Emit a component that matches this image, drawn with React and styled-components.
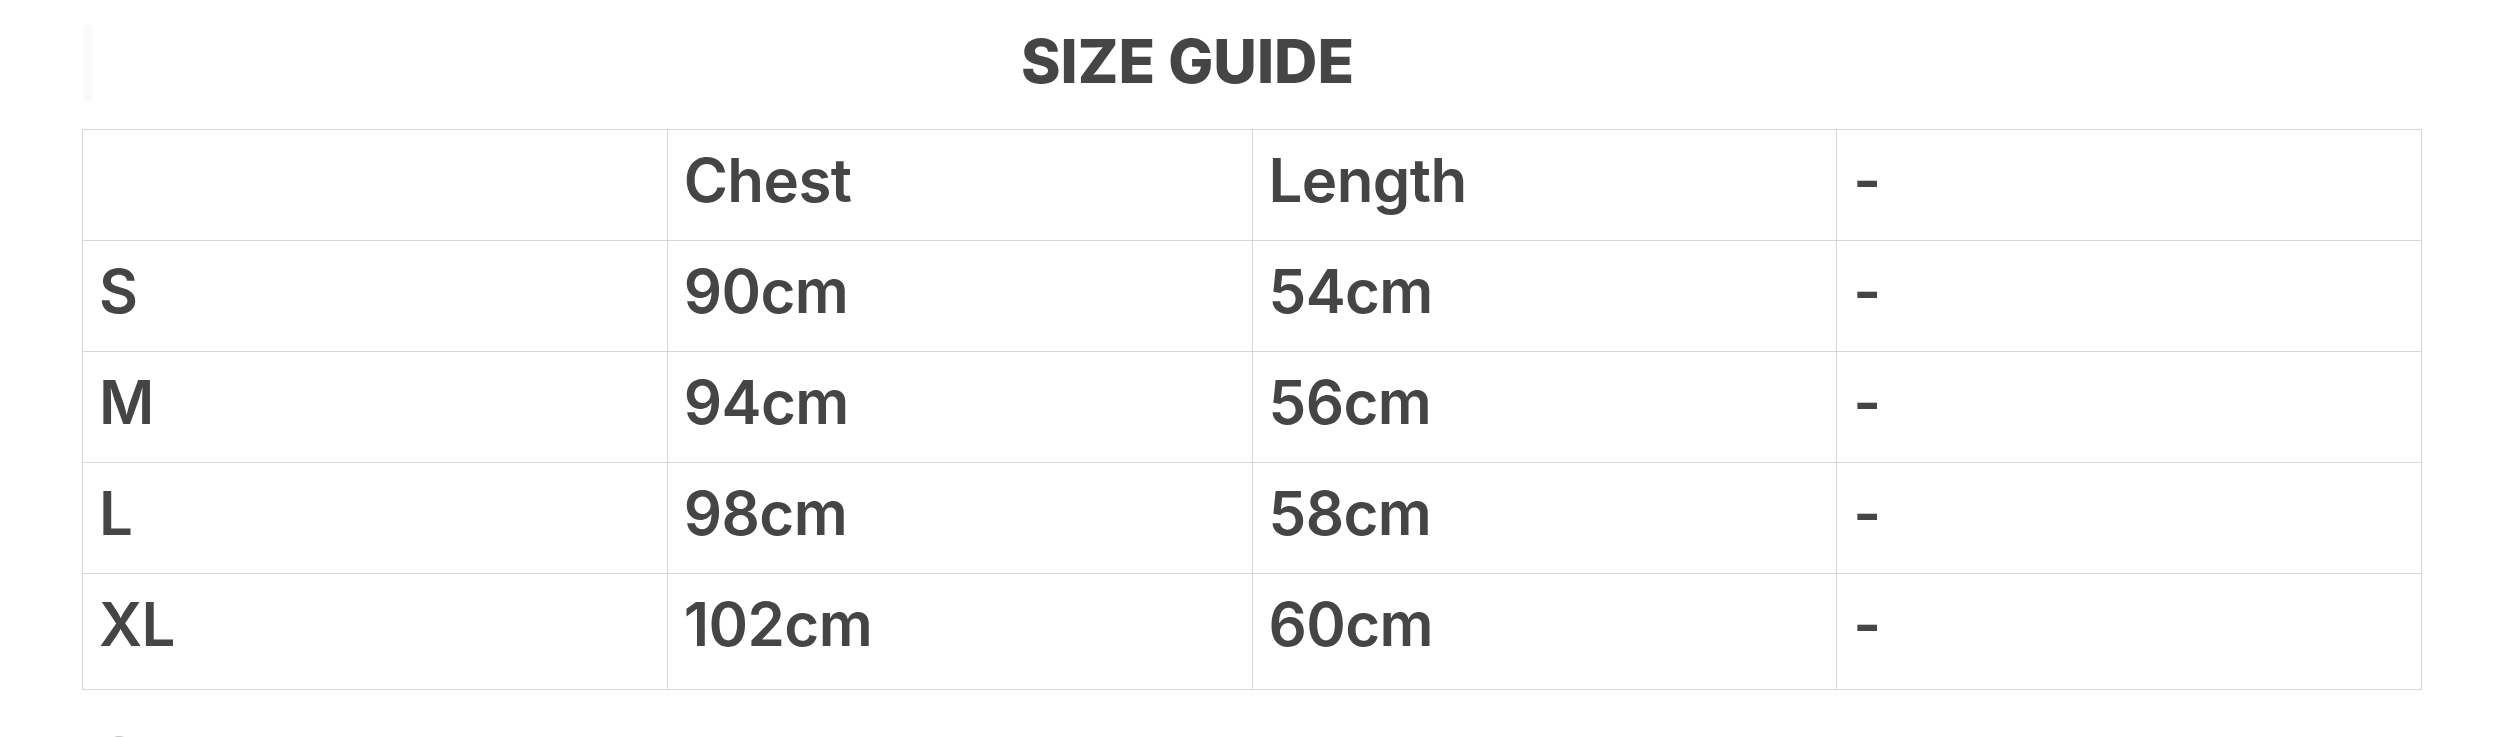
import React from "react";
import styled, { createGlobalStyle } from "styled-components";

/** 기본 스타일 */
const GlobalStyle = createGlobalStyle`
  html, body {
    margin: 0;
    padding: 0;
    background: #ffffff;
  }

  body {
    font-family: Inter, "Noto Sans", "Liberation Sans", sans-serif;
    color: #454545;
  }
`;

/** 페이지 */
const Page = styled.div`
  width: 2340px;
  padding: 25px 0 0;
  margin-left: 82px;
  height: 737px;
  box-sizing: border-box;
  overflow: hidden;
`;

/** 제목 줄 */
const Header = styled.div`
  display: flex;
  align-items: flex-start;
  height: 104px;
`;

/** 왼쪽의 흐린 막대 */
const GhostBar = styled.div`
  width: 10px;
  height: 77px;
  margin-left: 1px;
  border-radius: 5px;
  background: #fafafa;
`;

/** 제목 */
const Title = styled.h2`
  flex: 1;
  margin: 0;
  padding-right: 140px;
  text-align: center;
  font-size: 60px;
  line-height: 72px;
  font-weight: 800;
  color: #454545;
`;

/** 표 */
const Table = styled.table`
  width: 100%;
  border-collapse: collapse;
  table-layout: fixed;
`;

/** 행 */
const Row = styled.tr`
  height: ${(p) => (p.$last ? 116 : 111)}px;
`;

/** 칸 */
const Cell = styled.td`
  border: 1px solid #d6d6d6;
  padding: 14px 16px 0;
  vertical-align: top;
  font-size: 60px;
  line-height: 72px;
  font-weight: 560;
  letter-spacing: -0.6px;
  color: #454545;
  white-space: nowrap;
`;

/** 아래쪽 원 */
const Dot = styled.div`
  width: 26px;
  height: 26px;
  margin: 46px 0 0 24px;
  border-radius: 50%;
  border: 2px solid #c4c4c4;
  box-sizing: border-box;
`;

const rows = [
  ["", "Chest", "Length", "-"],
  ["S", "90cm", "54cm", "-"],
  ["M", "94cm", "56cm", "-"],
  ["L", "98cm", "58cm", "-"],
  ["XL", "102cm", "60cm", "-"],
];

const App = () => {
  return (
    <>
      <GlobalStyle />
      <Page>
        <Header>
          <GhostBar />
          <Title>SIZE GUIDE</Title>
        </Header>
        <Table>
          <tbody>
            {rows.map((r, i) => (
              <Row key={i} $last={i === rows.length - 1}>
                {r.map((c, j) => (
                  <Cell key={j}>{c}</Cell>
                ))}
              </Row>
            ))}
          </tbody>
        </Table>
        <Dot />
      </Page>
    </>
  );
};

export default App;
